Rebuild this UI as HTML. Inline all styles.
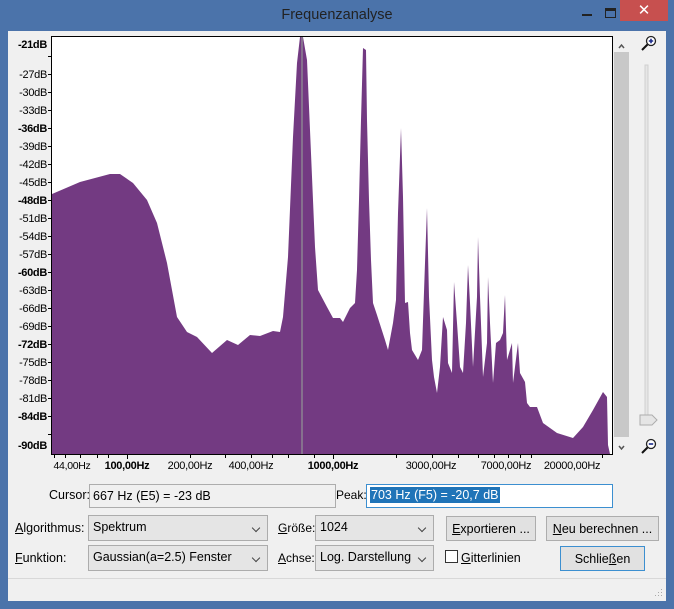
<!DOCTYPE html>
<html><head><meta charset="utf-8"><style>
*{margin:0;padding:0;box-sizing:border-box}
body{width:674px;height:609px;background:#4b73aa;position:relative;overflow:hidden;font-family:"Liberation Sans",sans-serif;font-size:12px;color:#000}
.a{position:absolute}
#client{left:8px;top:31px;width:658px;height:570px;background:#f0f0f0}
.title{left:0;top:7px;width:674px;text-align:center;font-size:14.5px;color:#222}
.yl{position:absolute;right:627px;font-size:11px;letter-spacing:-0.3px;line-height:12px}
.b{font-weight:bold}
.xl{position:absolute;top:460px;font-size:11px;letter-spacing:-0.3px;transform:translateX(-50%)}
.combo{position:absolute;background:#e5e5e5;border:1px solid #acacac;padding:4px 4px;font-size:12.5px}
.combo:after{content:"";position:absolute;right:8px;top:9px;width:5px;height:5px;border-right:1.5px solid #444;border-bottom:1.5px solid #444;transform:rotate(45deg)}
.btn{position:absolute;background:#e1e1e1;border:1px solid #adadad;text-align:center;line-height:24px;font-size:12.5px}
.lbl{position:absolute;font-size:12.5px}
u{text-decoration:underline}
</style></head><body>
<div class="a title">Frequenzanalyse</div>
<div class="a" style="left:582px;top:14px;width:10px;height:2px;background:#222"></div>
<div class="a" style="left:605px;top:8px;width:11px;height:10px;border:1px solid #222;border-top:3px solid #222"></div>
<div class="a" style="left:620px;top:0;width:48px;height:21px;background:#c7504f;color:#fff;text-align:center;font-size:15px;line-height:21px">✕</div>
<div class="a" id="client"></div>
<div class="a" style="left:51px;top:36px;width:562px;height:419px;border:1px solid #000;background:#fff"></div>
<svg class="a" style="left:0;top:0" width="674" height="609">
<polygon fill="#733a82" points="52,454 52,194 80,182 110,174 120,174 133,183 147,200 157,223 167,263 177,317 187,332 197,337 212,353 227,340 238,345 250,335 260,336 273,331 280,332 283,317 288,257 293,137 297,63 300,37 303,37 307,60 310,130 315,247 318,290 327,307 333,318 340,318 343,322 350,308 355,303 357,270 359,200 361,120 363,48 366,50 367,120 369,200 371,260 373,303 377,315 385,340 388,350 393,323 396,300 398,213 401,128 403,197 405,303 408,302 410,333 412,350 418,360 422,350 425,263 427,208 429,297 432,360 434,377 437,393 440,367 443,317 447,330 448,363 452,373 454,282 457,323 460,367 463,373 466,323 468,265 470,303 473,367 477,297 478,237 480,297 483,377 487,343 488,277 490,323 493,383 496,343 500,340 503,333 505,295 507,360 512,343 513,383 518,343 520,373 525,382 527,403 530,407 537,407 543,423 557,433 573,438 583,427 593,410 603,392 607,397 608,445 610,454"/>
<line x1="302" y1="37" x2="302" y2="454" stroke="#9aa89a" stroke-width="1"/>
<g stroke="#000" stroke-width="1">
<line x1="48" y1="56.5" x2="51" y2="56.5"/><line x1="48" y1="74.5" x2="51" y2="74.5"/><line x1="48" y1="92.5" x2="51" y2="92.5"/><line x1="48" y1="110.5" x2="51" y2="110.5"/><line x1="48" y1="128.5" x2="51" y2="128.5"/><line x1="48" y1="146.5" x2="51" y2="146.5"/><line x1="48" y1="164.5" x2="51" y2="164.5"/><line x1="48" y1="182.5" x2="51" y2="182.5"/><line x1="48" y1="200.5" x2="51" y2="200.5"/><line x1="48" y1="218.5" x2="51" y2="218.5"/><line x1="48" y1="236.5" x2="51" y2="236.5"/><line x1="48" y1="254.5" x2="51" y2="254.5"/><line x1="48" y1="272.5" x2="51" y2="272.5"/><line x1="48" y1="290.5" x2="51" y2="290.5"/><line x1="48" y1="308.5" x2="51" y2="308.5"/><line x1="48" y1="326.5" x2="51" y2="326.5"/><line x1="48" y1="344.5" x2="51" y2="344.5"/><line x1="48" y1="362.5" x2="51" y2="362.5"/><line x1="48" y1="380.5" x2="51" y2="380.5"/><line x1="48" y1="398.5" x2="51" y2="398.5"/><line x1="48" y1="416.5" x2="51" y2="416.5"/><line x1="48" y1="434.5" x2="51" y2="434.5"/>
<line x1="54.5" y1="455" x2="54.5" y2="458"/><line x1="65.5" y1="455" x2="65.5" y2="458"/><line x1="80.5" y1="455" x2="80.5" y2="458"/><line x1="97.5" y1="455" x2="97.5" y2="458"/><line x1="108.5" y1="455" x2="108.5" y2="458"/><line x1="127.5" y1="455" x2="127.5" y2="459"/><line x1="190.5" y1="455" x2="190.5" y2="458"/><line x1="225.5" y1="455" x2="225.5" y2="458"/><line x1="251.5" y1="455" x2="251.5" y2="458"/><line x1="272.5" y1="455" x2="272.5" y2="458"/><line x1="288.5" y1="455" x2="288.5" y2="458"/><line x1="314.5" y1="455" x2="314.5" y2="458"/><line x1="333.5" y1="455" x2="333.5" y2="459"/><line x1="396.5" y1="455" x2="396.5" y2="458"/><line x1="432.5" y1="455" x2="432.5" y2="458"/><line x1="458.5" y1="455" x2="458.5" y2="458"/><line x1="478.5" y1="455" x2="478.5" y2="458"/><line x1="494.5" y1="455" x2="494.5" y2="458"/><line x1="508.5" y1="455" x2="508.5" y2="458"/><line x1="520.5" y1="455" x2="520.5" y2="458"/><line x1="531.5" y1="455" x2="531.5" y2="458"/><line x1="602.5" y1="455" x2="602.5" y2="458"/>
</g>
<rect x="614" y="37" width="24" height="418" fill="#f0f0f0"/>
<rect x="614" y="52" width="15" height="385" fill="#c8c8c8"/>
<path d="M619 48 L621.5 45 L624 48" fill="none" stroke="#555" stroke-width="1.5"/>
<path d="M619 446 L621.5 449 L624 446" fill="none" stroke="#555" stroke-width="1.5"/>
<rect x="645" y="65" width="3" height="352" fill="#e6e6e6" stroke="#cfcfcf"/>
<path d="M640 415 H652 L657 420 L652 425 H640 Z" fill="#e5e5e5" stroke="#adadad"/>
<g>
<circle cx="651" cy="41" r="4.5" fill="#fff" stroke="#222" stroke-width="1.3"/>
<path d="M648.8 41 H653.2 M651 38.8 V43.2" stroke="#1a2a8a" stroke-width="1.6"/>
<line x1="647.5" y1="44.5" x2="642" y2="50" stroke="#111" stroke-width="2"/>
<circle cx="651" cy="444" r="4.5" fill="#fff" stroke="#222" stroke-width="1.3"/>
<path d="M648.8 444 H653.2" stroke="#1a2a8a" stroke-width="1.6"/>
<line x1="647.5" y1="447.5" x2="642" y2="453" stroke="#111" stroke-width="2"/>
</g>
<line x1="8" y1="578.5" x2="666" y2="578.5" stroke="#d8d8d8"/>
<g fill="#aaa"><rect x="661" y="595" width="1" height="1"/><rect x="658" y="595" width="1" height="1"/><rect x="655" y="595" width="1" height="1"/><rect x="661" y="592" width="1" height="1"/><rect x="658" y="592" width="1" height="1"/><rect x="661" y="589" width="1" height="1"/></g>
</svg>
<div class="yl b" style="top:39px">-21dB</div>
<div class="yl" style="top:69px">-27dB</div>
<div class="yl" style="top:87px">-30dB</div>
<div class="yl" style="top:105px">-33dB</div>
<div class="yl b" style="top:123px">-36dB</div>
<div class="yl" style="top:141px">-39dB</div>
<div class="yl" style="top:159px">-42dB</div>
<div class="yl" style="top:177px">-45dB</div>
<div class="yl b" style="top:195px">-48dB</div>
<div class="yl" style="top:213px">-51dB</div>
<div class="yl" style="top:231px">-54dB</div>
<div class="yl" style="top:249px">-57dB</div>
<div class="yl b" style="top:267px">-60dB</div>
<div class="yl" style="top:285px">-63dB</div>
<div class="yl" style="top:303px">-66dB</div>
<div class="yl" style="top:321px">-69dB</div>
<div class="yl b" style="top:339px">-72dB</div>
<div class="yl" style="top:357px">-75dB</div>
<div class="yl" style="top:375px">-78dB</div>
<div class="yl" style="top:393px">-81dB</div>
<div class="yl b" style="top:411px">-84dB</div>
<div class="yl b" style="top:440px">-90dB</div>
<div class="xl" style="left:72px;font-size:10.5px">44,00Hz</div>
<div class="xl b" style="left:127px">100,00Hz</div>
<div class="xl" style="left:190px">200,00Hz</div>
<div class="xl" style="left:251px">400,00Hz</div>
<div class="xl b" style="left:333px">1000,00Hz</div>
<div class="xl" style="left:431px">3000,00Hz</div>
<div class="xl" style="left:506px">7000,00Hz</div>
<div class="xl" style="left:572px">20000,00Hz</div>

<div class="lbl" style="left:49px;top:488px">Cursor:</div>
<div class="a" style="left:89px;top:484px;width:247px;height:24px;border:1px solid #adadad;background:#f0f0f0;padding:4px 3px;font-size:12.5px">667 Hz (E5) = -23 dB</div>
<div class="lbl" style="left:336px;top:488px;font-size:12px">Peak:</div>
<div class="a" style="left:366px;top:484px;width:247px;height:24px;border:1px solid #3c8fd0;background:#fff;padding:3px 3px;font-size:12.5px"><span style="background:#1f74b8;color:#fff;padding:1px 1px">703 Hz (F5) = -20,7 dB</span></div>

<div class="lbl" style="left:15px;top:521px"><u>A</u>lgorithmus:</div>
<div class="combo" style="left:88px;top:515px;width:180px;height:26px">Spektrum</div>
<div class="lbl" style="left:278px;top:521px;font-size:12px"><u>G</u>röße:</div>
<div class="combo" style="left:315px;top:515px;width:119px;height:26px">1024</div>
<div class="btn" style="left:446px;top:516px;width:90px;height:25px"><u>E</u>xportieren ...</div>
<div class="btn" style="left:546px;top:516px;width:113px;height:25px"><u>N</u>eu berechnen ...</div>

<div class="lbl" style="left:15px;top:551px"><u>F</u>unktion:</div>
<div class="combo" style="left:88px;top:545px;width:180px;height:26px">Gaussian(a=2.5) Fenster</div>
<div class="lbl" style="left:278px;top:551px;font-size:12px"><u>A</u>chse:</div>
<div class="combo" style="left:315px;top:545px;width:119px;height:26px">Log. Darstellung</div>
<div class="a" style="left:445px;top:550px;width:13px;height:13px;border:1px solid #333;background:#fff"></div>
<div class="lbl" style="left:461px;top:551px"><u>G</u>itterlinien</div>
<div class="btn" style="left:560px;top:546px;width:85px;height:25px;border-color:#3c8fd0">Schlie<u>ß</u>en</div>
</body></html>
